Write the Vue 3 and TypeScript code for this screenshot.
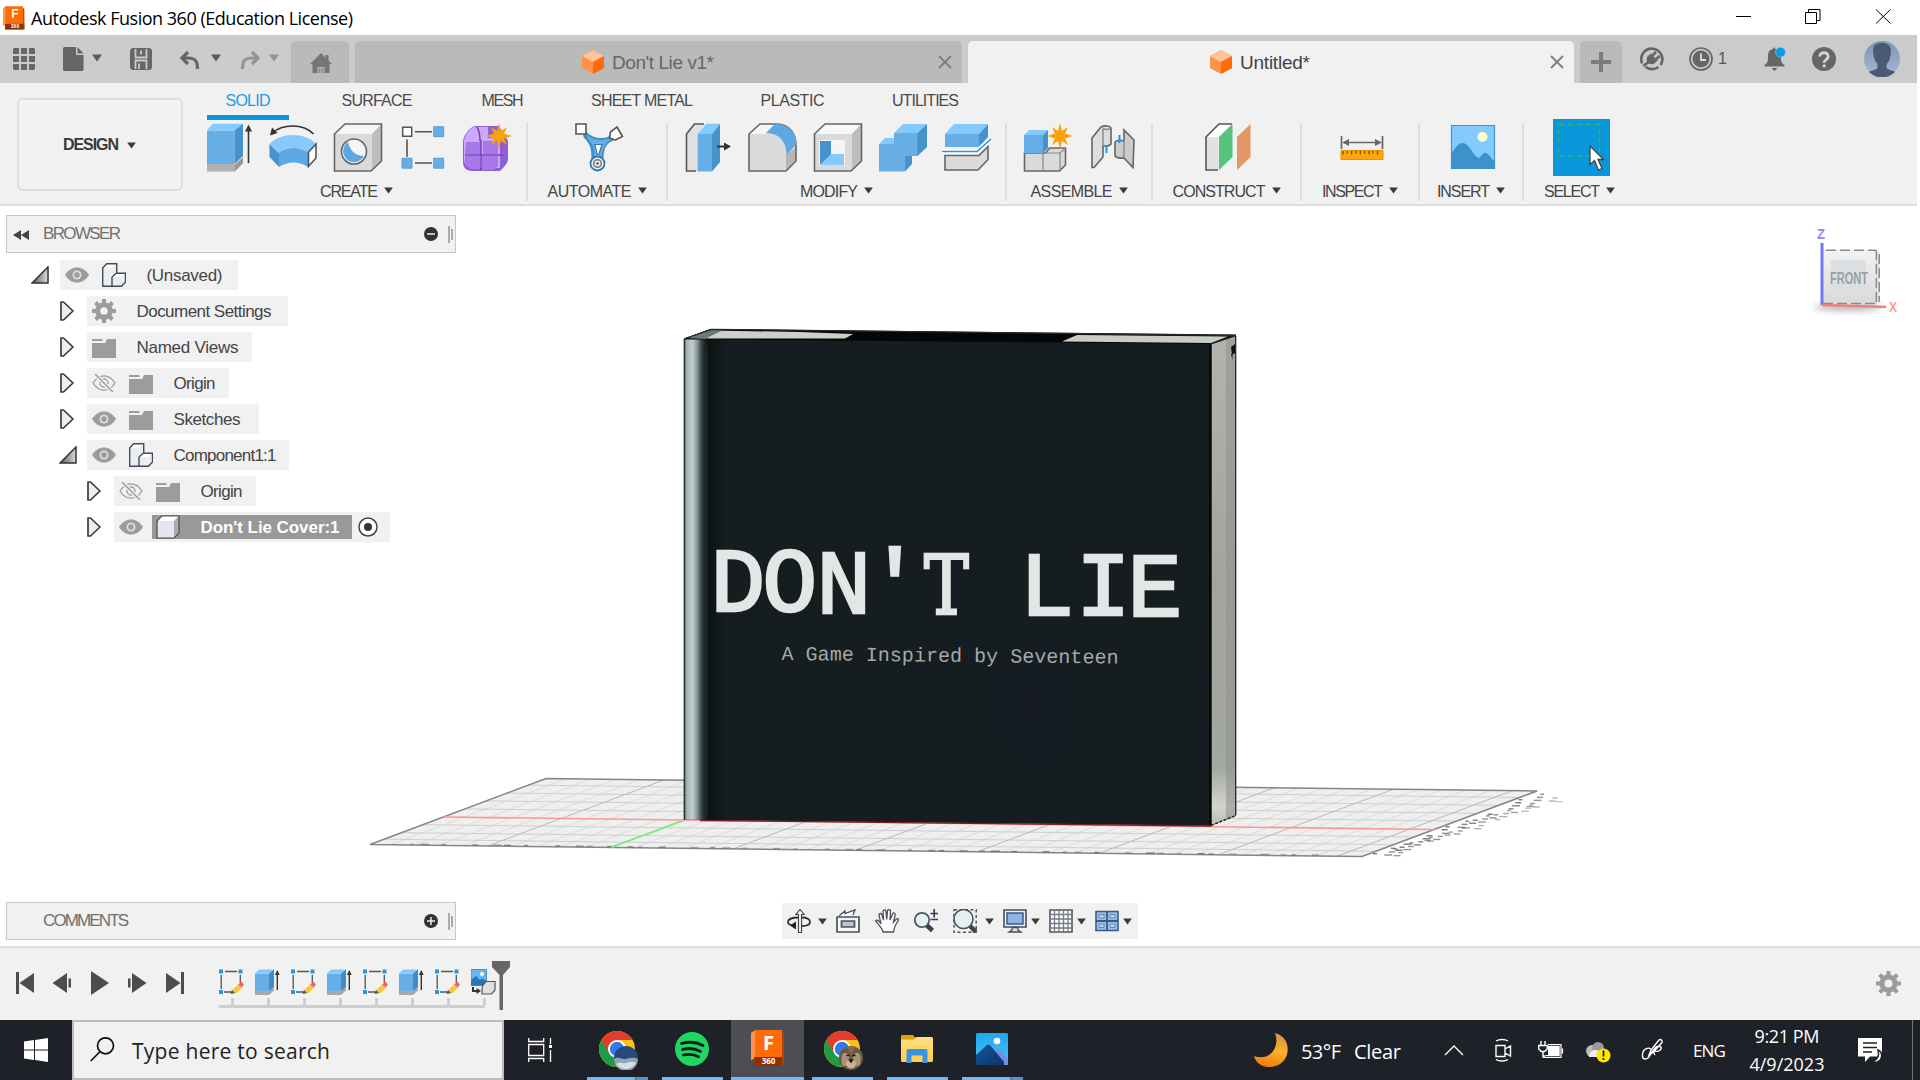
<script setup lang="ts">
interface Group { label: string; width: number; fit: number; tools: string[] }
interface TreeRow {
  depth: number; open?: boolean; width: number; eye?: 'on' | 'off'; icon: string
  label: string; fit: number; active?: boolean
}

// Spreads a text run over an exact width by adjusting its tracking.
const vFit = {
  mounted(el: HTMLElement, binding: { value: number }) {
    const chars = (el.textContent ?? '').length
    const natural = el.getBoundingClientRect().width
    const gap = (binding.value - natural) / Math.max(1, chars - 1)
    el.style.letterSpacing = `${gap}px`
    el.style.marginRight = `${-gap}px`
  },
}

const workspaceTabs = [
  { label: 'SOLID', fit: 45 }, { label: 'SURFACE', fit: 71 }, { label: 'MESH', fit: 42 },
  { label: 'SHEET METAL', fit: 102 }, { label: 'PLASTIC', fit: 64 }, { label: 'UTILITIES', fit: 67 },
]

const groups: Group[] = [
  { label: 'CREATE', width: 341, fit: 58, tools: ['extrude', 'revolve', 'hole', 'pattern', 'form'] },
  { label: 'AUTOMATE', width: 140, fit: 84, tools: ['automate'] },
  { label: 'MODIFY', width: 339, fit: 58, tools: ['presspull', 'fillet', 'shell', 'combine', 'split'] },
  { label: 'ASSEMBLE', width: 146, fit: 82, tools: ['component', 'joint'] },
  { label: 'CONSTRUCT', width: 149, fit: 93, tools: ['plane'] },
  { label: 'INSPECT', width: 118, fit: 61, tools: ['measure'] },
  { label: 'INSERT', width: 104, fit: 53, tools: ['picture'] },
  { label: 'SELECT', width: 111, fit: 56, tools: ['select'] },
]

const rows: TreeRow[] = [
  { depth: 0, open: true, width: 178, eye: 'on', icon: 'assembly', label: '(Unsaved)', fit: 76 },
  { depth: 1, width: 201, icon: 'gear', label: 'Document Settings', fit: 135 },
  { depth: 1, width: 165, icon: 'folder', label: 'Named Views', fit: 102 },
  { depth: 1, width: 142, eye: 'off', icon: 'folder', label: 'Origin', fit: 42 },
  { depth: 1, width: 172, eye: 'on', icon: 'folder', label: 'Sketches', fit: 67 },
  { depth: 1, open: true, width: 202, eye: 'on', icon: 'assembly', label: 'Component1:1', fit: 103 },
  { depth: 2, width: 142, eye: 'off', icon: 'folder', label: 'Origin', fit: 42 },
  { depth: 2, width: 276, eye: 'on', icon: 'body', label: "Don't Lie Cover:1", fit: 139, active: true },
]

const navTools: { icon: string; caret?: boolean }[] = [
  { icon: 'orbit', caret: true }, { icon: 'lookat' }, { icon: 'hand' }, { icon: 'zoom' },
  { icon: 'fit', caret: true }, { icon: 'display', caret: true }, { icon: 'grid', caret: true }, { icon: 'views', caret: true },
]

const playback = ['first', 'prev', 'play', 'next', 'last']
const features = ['t-sketch', 't-extrude', 't-sketch', 't-extrude', 't-sketch', 't-extrude', 't-sketch', 't-decal']

// Ground plane: corner points and the lines interpolated between its edges.
type P = [number, number]
const BL: P = [546, 778.5], BR: P = [1537, 791], FL: P = [370, 844.5], FR: P = [1362, 856.5]
const mix = (a: P, b: P, t: number): P => [a[0] + (b[0] - a[0]) * t, a[1] + (b[1] - a[1]) * t]
const seg = (a: P, b: P) => `M${a[0].toFixed(1)} ${a[1].toFixed(1)}L${b[0].toFixed(1)} ${b[1].toFixed(1)}`
const floorRows = [0.1, 0.22, 0.34, 0.46, 0.7, 0.82, 0.92].map(t => seg(mix(BL, FL, t), mix(BR, FR, t))).join('')
const majorX = [-0.004, 0.119, 0.242, 0.366, 0.489, 0.612, 0.735, 0.855, 0.975]
const major = majorX.slice(1).map(t => seg(mix(BL, BR, t), mix(FL, FR, t))).join('')
const minor = majorX.flatMap(t => [1, 2, 3, 4].map(k => t + k * 0.0246)).filter(t => t < 0.995)
  .map(t => seg(mix(BL, BR, t), mix(FL, FR, t))).join('')

const specks = Array.from({ length: 64 }, (_, i) => {
  const t = (i * 0.618) % 1
  const off = 1 + ((i * 37) % 44) * (0.35 + t * 0.45)
  return { x: 1372 + t * 160 + off, y: 853 - t * 60 + ((i * 13) % 5), w: 4 + (i % 5), o: 0.75 - off / 75 }
})
const frontMarks = Array.from({ length: 46 }, (_, i) => {
  const t = ((i * 0.618) % 1) * 0.93 + 0.04
  return { x: 370 + t * 992, y: 843 + t * 12, w: 4 + (i % 6), o: 0.4 + (i % 4) * 0.1 }
})
</script>

<template>
  <div class="screen">
    <svg class="defs" width="0" height="0" aria-hidden="true">
      <defs>
        <linearGradient id="gTri" x1="0" y1="0" x2="1" y2="0"><stop offset="0" stop-color="#555" /><stop offset="1" stop-color="#ddd" /></linearGradient>
        <linearGradient id="gMoon" x1="0.6" y1="0" x2="0.4" y2="1"><stop offset="0" stop-color="#cf9a45" /><stop offset=".5" stop-color="#fcb02c" /><stop offset="1" stop-color="#f0790f" /></linearGradient>
        <linearGradient id="gFolder" x1="0" y1="0" x2="0" y2="1"><stop offset="0" stop-color="#ffdf82" /><stop offset="1" stop-color="#ffcf48" /></linearGradient>
        <linearGradient id="gSky" x1="0" y1="0" x2="0" y2="1"><stop offset="0" stop-color="#1fa8ea" /><stop offset="1" stop-color="#4fc2f6" /></linearGradient>
        <linearGradient id="gMt" x1="0" y1="0" x2="1" y2="1"><stop offset="0" stop-color="#115a9e" /><stop offset="1" stop-color="#0f3068" /></linearGradient>
        <linearGradient id="gAv" x1="0" y1="0" x2="0" y2="1"><stop offset="0" stop-color="#7d95b5" /><stop offset="1" stop-color="#a7b8d3" /></linearGradient>
      </defs>
      <symbol id="caret" viewBox="0 0 10 8"><path d="M0 .5h10L5 7.5z" fill="currentColor" /></symbol>
      <symbol id="apps" viewBox="0 0 22 22"><path d="M1 0h5v6H0V1zM8 0h6v6H8zM16 0h5l1 1v5h-6zM0 8h6v6H0zM8 8h6v6H8zM16 8h6v6h-6zM0 16h6v6H1l-1-1zM8 16h6v6H8zM16 16h6v5l-1 1h-5z" fill="#666" /></symbol>
      <symbol id="file" viewBox="0 0 21 24"><path d="M1 0h12v8h7.500v15l-1 1H1l-1-1V1zM14.500 0l6 6.500h-6z" fill="#666" /></symbol>
      <symbol id="save" viewBox="0 0 22 22"><path d="M2 0h18l2 2v18l-2 2H2l-2-2V2z" fill="#666" /><path d="M5.500 1v8.500h11V1M5.500 21v-8.500h11V21M11 2.500v4M9 15.500V21" fill="none" stroke="#cbcbcb" stroke-width="1.800" /></symbol>
      <symbol id="undo" viewBox="0 0 22 20"><path d="M9 2L3 8l6 6M3.500 8H9c8 0 9.500 4 9.500 11" fill="none" stroke="currentColor" stroke-width="3.200" /></symbol>
      <symbol id="home" viewBox="0 0 22 20"><path d="M11 0l4.500 4.500V2h3v5.500L22 11h-2.500v9h-5v-6h-7v6h-5v-9H0z" fill="#757575" /><path d="M8.500 15h2v5h-2zM11.500 15h2v5h-2z" fill="#8c8c8c" /></symbol>
      <symbol id="cube" viewBox="0 0 22 24"><path d="M11 0l11 6v12l-11 6L0 18V6z" fill="#ff9249" /><path d="M11 0l11 6-11 6L0 6z" fill="#ffc49a" /><path d="M22 6v12l-11 6V12z" fill="#ff6c05" /></symbol>
      <symbol id="x" viewBox="0 0 14 14"><path d="M1 1l12 12M13 1L1 13" stroke="#808080" stroke-width="2" fill="none" /></symbol>
      <symbol id="plus" viewBox="0 0 20 20"><path d="M8 0h4v8h8v4h-8v8H8v-8H0V8h8z" fill="#7b7b7b" /></symbol>
      <symbol id="ext" viewBox="0 0 24 24"><path d="M2.200 16.500A10.500 10.500 0 1 1 20.500 18M18.500 20a10.500 10.500 0 0 1-13-.3" fill="none" stroke="#666" stroke-width="2.600" /><path d="M7 14.500c-1-3 0-5 1.500-6L11 6.500l6.500 7-2.500 2.500c-2 1.500-4 1.500-6 .5L4 20l-1.500-2z" fill="#666" /><path d="M12.500 8.500l3.500-3.500M16 12.500l3.500-3.500" stroke="#666" stroke-width="2.600" /></symbol>
      <symbol id="clock" viewBox="0 0 24 24"><circle cx="12" cy="12" r="11" fill="none" stroke="#666" stroke-width="1.700" /><circle cx="12" cy="12" r="8.500" fill="#666" /><path d="M12 6.500V13h5" stroke="#ddd" stroke-width="1.800" fill="none" /></symbol>
      <symbol id="bell" viewBox="0 0 22 24"><path d="M10 0l1.500 2C17 3 17 7 17 11s1 5.500 3.500 7v1.500h-20V18C3 16.500 4 15 4 11S4 3 9 2zM7.500 21h6l-3 3z" fill="#666" /><circle cx="16.500" cy="5.200" r="5" fill="#0d9be4" stroke="#cbcbcb" stroke-width=".5" /></symbol>
      <symbol id="help" viewBox="0 0 24 24"><circle cx="12" cy="12" r="12" fill="#666" /><path d="M7.800 9.500c0-5 8.400-5 8.400 0 0 3-4 3-4 6.200M12.200 17.500v2.800" stroke="#d5d5d5" stroke-width="2.800" fill="none" /></symbol>
      <symbol id="avatar" viewBox="0 0 36 36"><circle cx="18" cy="18" r="18" fill="url(#gAv)" /><path d="M9.500 6c2-5 15-6 17 1 .8 3 .3 8-.8 11-.8 3-2 4-3 5v4c1 2 5.500 2 8.300 4A18 18 0 0 1 5 31c3-2 7.500-2 8.500-4v-4c-1-1-2.500-3-3-5-1-3-2-8-1-12z" fill="#4a5a72" /></symbol>

      <symbol id="extrude" viewBox="0 0 50 50"><path d="M3 42h28l8-7v6l-8 8.500H3z" fill="#b0b0b0" /><path d="M31 43l8-7v5l-8 8z" fill="#999" /><path d="M3 8.500h27.500V42H3z" fill="#68aee6" /><path d="M3 8.500L8.500 1.800H39l-8.500 6.700z" fill="#85caff" /><path d="M39 1.800V34l-8.500 8V8.500z" fill="#4592cc" /><path d="M44.500 41V8" stroke="#333" stroke-width="1.600" /><path d="M44.500 2.500l3.500 7h-7z" fill="#333" /></symbol>
      <symbol id="revolve" viewBox="0 0 50 50"><path d="M1.500 22l9.500 9v14L1.500 35z" fill="#4592cc" /><path d="M1.500 22C13 10 37 10 48 22l-8 8.500c-8-6-21-6-29 0z" fill="#85caff" /><path d="M11 30.500c8-6 21-6 29 0V45c-9-6-20-6-29 0z" fill="#5da8e2" /><path d="M40.500 30l7.500-8v14l-7.500 8.500z" fill="#fff" stroke="#555" stroke-width="1.600" /><path d="M4.500 11C14 2 35 1 45.500 12" fill="none" stroke="#333" stroke-width="1.600" /><path d="M2 13.500l2-8 5.500 5.500z" fill="#333" /></symbol>
      <symbol id="hole" viewBox="0 0 50 50"><path d="M1.500 12L12 2h36.500v37L38 49H1.500z" fill="#dadada" /><path d="M1.500 12L12 2h36.500L39 12z" fill="#f5f5f5" /><path d="M48.500 2v37L39 48.500V12z" fill="#bdbdbd" /><path d="M1.500 12L12 2h36.500v37L38 49H1.500z" fill="none" stroke="#666" stroke-width="1.600" /><circle cx="21" cy="29.500" r="12.500" fill="#f5f5f5" stroke="#666" stroke-width="1.600" /><path d="M15 20a11 11 0 1 0 16 14c-8 0-14-5-16-14z" fill="#5da8e2" /></symbol>
      <symbol id="pattern" viewBox="0 0 50 50"><path d="M17 9.700h17M9 17.500V35M17 41h17" stroke="#555" stroke-width="1.600" /><path d="M4.700 5.200h9v9h-9z" fill="#fff" stroke="#555" stroke-width="1.500" /><path d="M35.700 4.700h10v10h-10zM4 36.200h10v10H4zM35.700 36.200h10v10h-10z" fill="#68aee6" stroke="#4592cc" stroke-width=".8" /></symbol>
      <symbol id="form" viewBox="0 0 50 50"><path d="M13 4h24l9 15v18c0 4-4 8-8 12H10c-6 0-9-4-9-9V20c0-5 5-14 12-16z" fill="#8e5fd0" /><path d="M12 5h14v11h12v30H11c-6 0-9-4-9-9V20c0-6 5-13 10-15z" fill="#cda8ff" /><path d="M4 20h15v12H3zM21 19h15v13H21zM3 34h15v13h-8c-5 0-7-4-7-8zM20 34h16v10l-4 4H20z" fill="#a878e8" /><path d="M15 5c2 3 3 8 3 14M3 33h38M19 18v30" stroke="#7443b5" stroke-width="1.500" fill="none" /><path d="M37 1l2 8 6-4-3 6.500 8 2.500-8 2.500 3 6.500-6-4-2 8-2-8-6 4 3-6.500-8-2.500 8-2.500-3-6.500 6 4z" fill="#f8a20c" /></symbol>
      <symbol id="automate" viewBox="0 0 50 50"><path d="M10 9c3 0 6 7 17 7 5 0 8-1 10-4l4 6c-8 2-12 7-11.500 22h-12c0-12-.5-15-4-20S8 15 10 9z" fill="#3f8fca" /><path d="M12 11c3 5 9 7 15 7 5 0 7-1 10-3l1 2c-7 3-10 8-11 23h-6.500c0-13-.5-16-4-20-3-4-4-6-4.500-9z" fill="#68aee6" /><path d="M21 22.500h7L25 32h-2z" fill="#fff" stroke="#3478ad" stroke-width="1.200" /><path d="M2 2h10v10H2z" fill="#fff" stroke="#555" stroke-width="1.600" /><path d="M43 5l5.500 9.500-7 3.500-6-2 1-6z" fill="#fff" stroke="#555" stroke-width="1.600" /><circle cx="23.500" cy="41.500" r="7" fill="#eee" stroke="#3478ad" stroke-width="1.800" /><circle cx="23.500" cy="41.500" r="3.800" fill="none" stroke="#777" stroke-width="1.500" /><circle cx="23.500" cy="41.500" r="1.300" fill="#555" /></symbol>
      <symbol id="presspull" viewBox="0 0 50 50"><path d="M2.500 12l8-10H20l-7 10v37H2.500z" fill="#e0e0e0" /><path d="M12 49H2.500V12l8-10H20" fill="none" stroke="#555" stroke-width="1.600" /><path d="M13.500 12H28v37.500H13.500z" fill="#68aee6" /><path d="M13.500 12L22 1.700h14L28 12z" fill="#85caff" /><path d="M36 1.700V40l-8 9.500V12z" fill="#4592cc" /><path d="M33 24.500h8" stroke="#333" stroke-width="2" /><path d="M47 24.500l-7-4v8z" fill="#333" /></symbol>
      <symbol id="fillet" viewBox="0 0 50 50"><path d="M1 12L12 2h16c14 0 20 10 20 25v11L38 49H1z" fill="#dadada" /><path d="M1 12L12 2h14l-8 10z" fill="#f5f5f5" /><path d="M38 33l10-8v13L38 49z" fill="#b5b5b5" /><path d="M1 12L12 2h16c14 0 20 10 20 22v15L38 49H1z" fill="none" stroke="#666" stroke-width="1.600" /><path d="M18 11L27 2c14 0 21.500 9 21.500 20l-10 11c0-13-7-22-20.500-22z" fill="#5da8e2" /></symbol>
      <symbol id="shell" viewBox="0 0 50 50"><path d="M1.500 12L12 2h36.500v37L38 49H1.500z" fill="#dadada" /><path d="M1.500 12L12 2h36.500L39 12z" fill="#f8f8f8" /><path d="M48.500 2v37L39 48.500V12z" fill="#bdbdbd" /><path d="M1.500 12L12 2h36.500v37L38 49H1.500z" fill="none" stroke="#666" stroke-width="1.600" /><path d="M6 18h26v26H6z" fill="#f5f5f5" /><path d="M7 19h11v14L7 43z" fill="#4592cc" /><path d="M18 32h13v11.500H7z" fill="#85caff" /></symbol>
      <symbol id="combine" viewBox="0 0 50 50"><path d="M1 22h15V11h24v23H27v15.500H1z" fill="#68aee6" /><path d="M1 22l6-6h9v6zM16 11l9-9h24l-9.500 9z" fill="#85caff" /><path d="M49 2v23l-9.500 9V11zM27 34h7v8l-7 7.500z" fill="#4592cc" /></symbol>
      <symbol id="split" viewBox="0 0 50 50"><path d="M3 12h34v13H3z" fill="#68aee6" /><path d="M3 12l9-10h34L37 12z" fill="#85caff" /><path d="M46 2v13l-9 10V12z" fill="#4592cc" /><path d="M3 33.500h34l9-9v13L36 48H3z" fill="#dadada" stroke="#666" stroke-width="1.600" /><path d="M0 29.500h35L49 17" fill="none" stroke="#fff" stroke-width="5" /><path d="M0 29.500h35L49 17" fill="none" stroke="#2196e8" stroke-width="1.600" /></symbol>
      <symbol id="component" viewBox="0 0 50 50"><path d="M1.500 31h21l4-5h16v17l-6 6h-35z" fill="#dadada" stroke="#666" stroke-width="1.600" /><path d="M20 31h17l6-5M20 31v18M37 31v17" stroke="#888" stroke-width="1.200" fill="none" /><path d="M1 13h19v18H1z" fill="#68aee6" /><path d="M1 13l5-5h19l-5 5z" fill="#85caff" /><path d="M25 8v18l-5 5V13z" fill="#4592cc" /><path d="M37 1l2 8 6-4-3 6.500 8 2.500-8 2.500 3 6.500-6-4-2 8-2-8-6 4 3-6.500-8-2.500 8-2.500-3-6.500 6 4z" fill="#f8a20c" /></symbol>
      <symbol id="joint" viewBox="0 0 50 50"><path d="M4 16l9-11c4-2 9-1 10 1v16c-2 3-6 2-8 2v11L6 45.500H4z" fill="#ddd" stroke="#666" stroke-width="1.600" /><path d="M15 7v17M15 6c2 2 6 2 8 0" fill="none" stroke="#888" stroke-width="1.400" /><path d="M46 18L36 8v11c-3-1-7-1-9 1v14c2 3 6 2 9 2l9 9.500z" fill="#ccc" stroke="#666" stroke-width="1.600" /><path d="M36 18v18" stroke="#888" stroke-width="1.400" /><path d="M18.500 23v8M31.500 13v8" stroke="#2196e8" stroke-width="2" /></symbol>
      <symbol id="plane" viewBox="0 0 50 50"><path d="M3 15L16 2h13L15.500 15v33H3z" fill="#e2e2e2" /><path d="M3 15L16 2h13L15.500 15z" fill="#fff" /><path d="M15 48H3V15L16 2h13" fill="none" stroke="#555" stroke-width="1.600" /><path d="M16 15L29.500 2v33L16 48z" fill="#56c47a" /><path d="M34 15L47.500 2v33L34 48z" fill="#e39764" /></symbol>
      <symbol id="measure" viewBox="0 0 50 50"><path d="M4.500 14v13M45.500 14v13M8 20.500h34" stroke="#666" stroke-width="1.700" /><path d="M5 20.500l7-3.500v7zM45 20.500L38 17v7z" fill="#666" /><path d="M4 28.500h42v9H4z" fill="#ffa60a" stroke="#e89000" /><path d="M6 29v3.500M10.300 29v2.500M14.600 29v3.500M19 29v2.500M23.300 29v3.500M27.600 29v2.500M32 29v3.500M36 29v2.500M40.500 29v3.500" stroke="#7a5200" stroke-width="1.300" /></symbol>
      <symbol id="picture" viewBox="0 0 50 50"><path d="M3.500 3.500h43v43h-43z" fill="#85caff" stroke="#3d95d0" stroke-width="1.200" /><path d="M4 31c6-10 10-12 15-8s7 12 12 13c3-2 4-6 7-5s5 5 8 8v7.500H4z" fill="#3e92cc" /><circle cx="34.500" cy="15" r="5" fill="#ffffc8" /></symbol>
      <symbol id="select" viewBox="0 0 57 57"><path d="M0 0h57v57H0z" fill="#0a96da" /><path d="M5.500 5.500h41v31.500h-41z" fill="none" stroke="#2bb673" stroke-width="1.600" stroke-dasharray="5.500 3.500" /><path d="M37 27v18.500l4.500-4 4 9.500 3.500-1.500-4-9h5.500z" fill="#fff" stroke="#444" stroke-width="1.300" /></symbol>

      <symbol id="eye" viewBox="0 0 24 18"><path d="M0 9C6-1 18-1 24 9 18 19 6 19 0 9z" fill="#9c9c9c" /><circle cx="12" cy="9" r="4.500" fill="#ddd" /><circle cx="12" cy="9" r="2.700" fill="#9c9c9c" /></symbol>
      <symbol id="eyeoff" viewBox="0 0 24 18"><path d="M1 9C7-.5 17-.5 23 9 17 18.500 7 18.500 1 9z" fill="none" stroke="#9c9c9c" stroke-width="1.300" /><circle cx="12" cy="9" r="4" fill="none" stroke="#9c9c9c" stroke-width="1.400" /><path d="M3 0l18 18" stroke="#f1f1f1" stroke-width="4" /><path d="M3 0l18 18" stroke="#999" stroke-width="1.400" /></symbol>
      <symbol id="folder" viewBox="0 0 24 20"><path d="M0 1h10l1 2H0zM0 5h13l2-4h9v19H0z" fill="#9c9c9c" /></symbol>
      <symbol id="gear" viewBox="0 0 24 24"><circle cx="12" cy="12" r="6.300" fill="none" stroke="#9c9c9c" stroke-width="5" /><path d="M12 0v5M12 19v5M0 12h5M19 12h5M3.500 3.500l4 4M16.500 16.500l4 4M20.500 3.500l-4 4M7.500 16.500l-4 4" stroke="#9c9c9c" stroke-width="4" /></symbol>
      <symbol id="assembly" viewBox="0 0 24 24"><path d="M.7 5l4-4.300h10V10h8.600l.2 9-4 4.300H.7z" fill="#eceef2" /><path d="M.7 5l4-4.300h10L10 5zM10 14l4-4h9l-4 4z" fill="#fff" /><path d="M.7 5l4-4.300h10V10l8.800.3V19l-4 4.300H.7zM10 14v9M10 14l4.500-4" fill="none" stroke="#444b5a" stroke-width="1.400" /></symbol>
      <symbol id="body" viewBox="0 0 24 24"><path d="M1 6l5-5.200h17V18l-5 5.200H1z" fill="#e3e6ec" /><path d="M1 6l5-5.200h17L18 6z" fill="#fff" /><path d="M23 .8V18l-5 5.200V6z" fill="#aab" /><path d="M1 6l5-5.200h17V18l-5 5.200H1z" fill="none" stroke="#555" stroke-width="1.300" /></symbol>
      <symbol id="tri" viewBox="0 0 14 20"><path d="M1 1h2.500L13 10 3.500 19H1z" fill="#eee" stroke="#3c3c3c" stroke-width="1.700" stroke-linejoin="round" /></symbol>
      <symbol id="triopen" viewBox="0 0 18 18"><path d="M17 1v16H1z" fill="url(#gTri)" stroke="#333" stroke-width="1.500" /></symbol>

      <symbol id="orbit" viewBox="0 0 24 24"><path d="M12 8.500c-8 0-11 2-11 4.500s4 3.500 8 3.500M15 17c5 0 8-1.500 8-4s-3-4.500-8-4.500" fill="none" stroke="#333" stroke-width="1.800" /><path d="M3 16.500l6-4v8z" fill="#222" /><path d="M13 .5l4 5h-2.500v18h-3v-18H9z" fill="#fff" stroke="#444" stroke-width="1.200" /></symbol>
      <symbol id="lookat" viewBox="0 0 24 24"><path d="M1 8h22v15H1z" fill="#f3f5f8" stroke="#4a5262" stroke-width="1.700" /><path d="M5.500 12h13v6h-13z" fill="#bcc3cc" stroke="#4a5262" stroke-width="1.700" /><path d="M3 7l6-5v2.500L19 .8 17 6" fill="#fff" stroke="#4a5262" stroke-width="1.300" /></symbol>
      <symbol id="hand" viewBox="0 0 24 24"><path d="M8 23c0-3-5-8-7.300-11 1-2 4 0 5.300 3L4 6c0-2 2.500-2 3 0l1.500 5L8 2.500c0-2 3-2 3 0l.7 8L12.500 2c0-2 3-2 3 .3L15 11l2.500-6c1-2 3-1 2.600 1L18.500 13l3-3c1.500-1 2.500.5 1.500 2-2 3-4 6-4.500 11z" fill="#fdfdfd" stroke="#4a4f5a" stroke-width="1.300" /></symbol>
      <symbol id="zoom" viewBox="0 0 24 24"><circle cx="8" cy="11" r="7.200" fill="#e5f2f3" stroke="#4a5262" stroke-width="1.700" /><path d="M13 16.500l5.500 5" stroke="#39404d" stroke-width="4.500" /><path d="M16.500 4.500h7.500M20.200 0v8.500M16.500 10.500H24" stroke="#39404d" stroke-width="1.700" /></symbol>
      <symbol id="fit" viewBox="0 0 24 24"><path d="M1 .8h22.200v22.500H1z" fill="none" stroke="#555" stroke-width="1.500" stroke-dasharray="3 2.500" /><circle cx="10.500" cy="10" r="9.500" fill="#e5f0ef" stroke="#4a5262" stroke-width="1.600" /><path d="M17 17l6 6" stroke="#444" stroke-width="4.500" /></symbol>
      <symbol id="display" viewBox="0 0 24 24"><path d="M1 1h22v17H1z" fill="#eef0f4" stroke="#444b5a" stroke-width="1.600" /><path d="M4 4h16v11H4z" fill="#8fb4df" stroke="#375a92" stroke-width="1.500" /><path d="M9 18.500h6v2.500l3 2H6l3-2z" fill="#ddd" stroke="#444b5a" stroke-width="1.300" /></symbol>
      <symbol id="grid" viewBox="0 0 24 24"><path d="M1 1h22v22H1z" fill="#fff" stroke="#555" stroke-width="1.600" /><path d="M5.500 1v22M10 1v22M14.500 1v22M19 1v22M1 5.500h22M1 10h22M1 14.500h22M1 19h22" stroke="#737b86" stroke-width="1.300" /></symbol>
      <symbol id="views" viewBox="0 0 24 24"><path d="M1 2.500h22v19H1z" fill="#9bbce4" stroke="#3a5a8c" stroke-width="1.600" /><path d="M12 2v20M1 12h22" stroke="#3a5a8c" stroke-width="1.800" /><path d="M4 5.500h5v3.500H4zM15 5.500h5v3.500h-5zM4 15h5v3.500H4zM15 15h5v3.500h-5z" fill="#bfd6f2" stroke="#5f87bd" stroke-width="1" /></symbol>

      <symbol id="first" viewBox="0 0 20 24"><path d="M1 1h3v22H1zM19 2v20L4.500 12z" fill="#4d4d4d" /></symbol>
      <symbol id="prev" viewBox="0 0 20 24"><path d="M15 2v20L.5 12zM16.500 7.500H19v9h-2.500z" fill="#4d4d4d" /></symbol>
      <symbol id="play" viewBox="0 0 20 24"><path d="M1 0v24l18-12z" fill="#4d4d4d" /></symbol>
      <symbol id="next" viewBox="0 0 20 24"><path d="M5 2v20l14.500-10zM1 7.500h2.500v9H1z" fill="#4d4d4d" /></symbol>
      <symbol id="last" viewBox="0 0 20 24"><path d="M16 1h3v22h-3zM1 2v20l14.500-10z" fill="#4d4d4d" /></symbol>
      <symbol id="t-sketch" viewBox="0 0 25 26"><path d="M2.200 6v14M6 2.500h12M21.300 6v8M5 23h8" stroke="#555" stroke-width="1.300" /><path d="M0 .5h4v4H0zM19.500 .5h4v4h-4zM0 21h4v4H0z" fill="#1e96ea" /><path d="M13 21.500l7-7 3.500 3.500-7 7z" fill="#ffc24b" /><path d="M19.500 15.500l2.500-3 3 3-2.500 3z" fill="#f25c5c" /><path d="M11.500 25l1.500-4 3 3z" fill="#555" /></symbol>
      <symbol id="t-extrude" viewBox="0 0 25 26"><path d="M0 22h14l5-4v3.500L14 26H0z" fill="#a9a9a9" /><path d="M0 4.500h14V22H0z" fill="#68aee6" /><path d="M0 4.500L4 .5h15l-5 4z" fill="#85caff" /><path d="M19 .5V18l-5 4V4.500z" fill="#3e8dc8" /><path d="M22.300 21V4" stroke="#333" stroke-width="1.400" /><path d="M22.300 1l2.400 5h-4.800z" fill="#333" /></symbol>
      <symbol id="t-decal" viewBox="0 0 25 26"><path d="M0 .5h15.500v16H0z" fill="#68b7f2" stroke="#3e92cc" /><path d="M0 11l5-4 4 4 2-2 4.500 3v4.500H0z" fill="#2878b5" /><circle cx="11" cy="5" r="2" fill="#ffffc8" /><path d="M2 18v4h4" fill="none" stroke="#333" stroke-width="2" /><path d="M10 22l-4.500-3v6z" fill="#333" /><path d="M12 16l3-3.500h9V21l-3.500 4H11v-6z" fill="#e0e0e0" stroke="#555" stroke-width="1.200" /></symbol>

      <symbol id="fusion" viewBox="0 0 34 36"><path d="M0 3l5-3 4 1v26l-9 3z" fill="#ff9350" /><path d="M3 26h30v10H3z" fill="#8f3200" /><path d="M3 1.500C3 .6 4 0 5 0h26v27H3z" fill="#ff6b06" /><path d="M31 2l2 2v31h-2z" fill="#b34400" /><path d="M0 3l4-2.500V27l-4 2z" fill="#ff9350" /></symbol>
      <symbol id="chrome" viewBox="0 0 36 36"><circle cx="18" cy="18" r="18" fill="#fbc116" /><path d="M2.400 9A18 18 0 0 0 17 36l9-13.500z" fill="#229b47" /><path d="M2.400 9l7.800 13.500L18 9h15.600A18 18 0 0 0 2.400 9z" fill="#e33b2e" /><circle cx="18" cy="18" r="9" fill="#fff" /><circle cx="18" cy="18" r="7.200" fill="#2f7bea" /></symbol>
      <symbol id="b-sky" viewBox="0 0 24 24"><circle cx="12" cy="12" r="12" fill="#27497f" /><path d="M0 13c5-3 8 1 12 0s8-2 12 0A12 12 0 0 1 0 13z" fill="#8fa3b8" /><path d="M2 18c4-3 6 0 10-1s6-2 10 0a12 12 0 0 1-20 1z" fill="#d8dfe6" /></symbol>
      <symbol id="b-cat" viewBox="0 0 24 24"><circle cx="12" cy="12" r="12" fill="#6b573f" /><path d="M3 9c2-4 6-2 7 2s-2 10-5 9-3-7-2-11zM21 9c-2-4-6-2-7 2s2 10 5 9 3-7 2-11z" fill="#a8937a" /><path d="M7 1c3 2 3 5 5 8 2-3 2-6 5-8-3-1.500-7-1.500-10 0z" fill="#8a6b48" /><ellipse cx="12" cy="18" rx="5" ry="4.500" fill="#c9b391" /><path d="M7.500 9.500h3M13.500 9.500h3M10.500 14h3L12 16z" stroke="#1c130c" stroke-width="1.500" /></symbol>
      <symbol id="spotify" viewBox="0 0 34 34"><circle cx="17" cy="17" r="17" fill="#1ed760" /><path d="M6.500 11.500c7-2 15-1.500 21.500 2M7.500 17.500c6-1.700 12.500-1 18 2M8.500 23c5-1.200 10.500-.8 15 1.800" fill="none" stroke="#1b1f22" stroke-width="2.800" stroke-linecap="round" /></symbol>
      <symbol id="explorer" viewBox="0 0 32 28"><path d="M0 1l1-1h11l2.500 3v4H0z" fill="#dfa10a" /><path d="M0 4.500h13l2-2.500h16l1 1v23l-1 1H1l-1-1z" fill="url(#gFolder)" /><path d="M5.500 28V16c0-1 .5-2 1.500-2h18c1 0 1.500 1 1.500 2v12h-5v-7.500h-11V28z" fill="#3a92e0" /></symbol>
      <symbol id="photos" viewBox="0 0 32 32"><path d="M1 0h30l1 1v30l-1 1H1l-1-1V1z" fill="url(#gSky)" /><path d="M14 23l8-8 10 11v6H14z" fill="#6f8fe6" /><path d="M0 22l11-10c1-.8 2-.8 3 0l14 17v3H0z" fill="url(#gMt)" /><circle cx="21" cy="8" r="3.300" fill="#fff" /></symbol>
    </svg>

    <header class="titlebar">
      <span class="badge"><svg class="ico-app"><use href="#fusion" /></svg><b class="badge-f">F</b><b class="badge-n">360</b></span>
      <span v-fit="322" class="title">Autodesk Fusion 360 (Education License)</span>
      <svg class="winctl" width="155" height="15" viewBox="0 0 155 15" fill="none" stroke="#000" stroke-width="1">
        <path d="M0 7.500h15M69.500 3.500h11v11h-11zM72.500 3.500v-3h11.500v11h-3.500M140 .5l14.500 14M154.500 .5L140 14.500" />
      </svg>
    </header>

    <nav class="tabbar">
      <svg class="q apps"><use href="#apps" /></svg>
      <svg class="q file"><use href="#file" /></svg>
      <svg class="q caret c1"><use href="#caret" /></svg>
      <svg class="q save"><use href="#save" /></svg>
      <svg class="q undo"><use href="#undo" /></svg>
      <svg class="q caret c2"><use href="#caret" /></svg>
      <svg class="q redo"><use href="#undo" /></svg>
      <svg class="q caret c3"><use href="#caret" /></svg>
      <div class="tab home"><svg width="22" height="20"><use href="#home" /></svg></div>
      <div class="tab doc">
        <svg class="cube"><use href="#cube" /></svg><span v-fit="102">Don't Lie v1*</span>
        <svg class="close"><use href="#x" /></svg>
      </div>
      <div class="tab doc current">
        <svg class="cube"><use href="#cube" /></svg><span v-fit="70">Untitled*</span>
        <svg class="close"><use href="#x" /></svg>
      </div>
      <div class="tab add"><svg width="20" height="20"><use href="#plus" /></svg></div>
      <svg class="r ext"><use href="#ext" /></svg>
      <svg class="r clock"><use href="#clock" /></svg>
      <span class="jobs">1</span>
      <svg class="r bell"><use href="#bell" /></svg>
      <svg class="r help"><use href="#help" /></svg>
      <svg class="r avatar"><use href="#avatar" /></svg>
    </nav>

    <section class="ribbon">
      <button class="design"><b v-fit="56">DESIGN</b><svg class="car"><use href="#caret" /></svg></button>
      <div class="ribbon-main">
        <div class="modes">
          <span v-for="(t, i) in workspaceTabs" :key="t.label" class="mode" :class="{ on: i === 0 }"><span v-fit="t.fit">{{ t.label }}</span></span>
        </div>
        <div class="groups">
          <div v-for="g in groups" :key="g.label" class="group" :style="{ width: g.width + 'px' }">
            <div class="tools">
              <span v-for="t in g.tools" :key="t" class="slot"><svg :class="t === 'select' ? 'sel' : 'tool'"><use :href="'#' + t" /></svg></span>
            </div>
            <div class="glabel"><span v-fit="g.fit">{{ g.label }}</span><svg class="car"><use href="#caret" /></svg></div>
          </div>
        </div>
      </div>
    </section>

    <main class="viewport">
      <svg class="scene" viewBox="0 208 1920 738" width="1920" height="738">
        <defs>
          <linearGradient id="spine" x1="0" x2="1"><stop offset="0" stop-color="#5b6869" /><stop offset=".12" stop-color="#a9b7b8" /><stop offset=".33" stop-color="#bfcccc" /><stop offset=".5" stop-color="#8a9899" /><stop offset=".68" stop-color="#364244" /><stop offset=".85" stop-color="#12191b" /><stop offset="1" stop-color="#0b1214" /></linearGradient>
          <linearGradient id="side" x1="0" y1="0" x2="0" y2="1"><stop offset="0" stop-color="#b2b3ac" /><stop offset=".5" stop-color="#a3a49d" /><stop offset=".88" stop-color="#a2a7a1" /><stop offset=".96" stop-color="#d0d4ca" /><stop offset="1" stop-color="#b9bdb4" /></linearGradient>
          <linearGradient id="face" x1="0" x2="1"><stop offset="0" stop-color="#0b1214" /><stop offset=".04" stop-color="#151d20" /><stop offset="1" stop-color="#151d20" /></linearGradient>
          <radialGradient id="glow"><stop offset="0" stop-color="#161b27" /><stop offset="1" stop-color="#151d20" stop-opacity="0" /></radialGradient>
          <linearGradient id="vc" x1="0" y1="0" x2="0" y2="1"><stop offset="0" stop-color="#f3f3f3" /><stop offset="1" stop-color="#d8d8d8" /></linearGradient>
          <filter id="soft" x="-20%" y="-60%" width="140%" height="220%"><feGaussianBlur stdDeviation="3" /></filter>
        </defs>
        <path d="M546 778.500L1537 791L1362 856.500L370 844.500Z" fill="#efefef" />
        <path :d="minor" stroke="#dadada" stroke-width=".9" fill="none" />
        <path :d="floorRows" stroke="#cfcfcf" stroke-width="1" fill="none" />
        <path :d="major" stroke="#b9b9b9" stroke-width="1" fill="none" />
        <path d="M546 778.500L1537 791L1362 856.500L370 844.500Z" fill="none" stroke="#858585" stroke-width="1.500" />
        <rect v-for="(m, i) in frontMarks" :key="'m' + i" :x="m.x" :y="m.y" :width="m.w" height="1.200" fill="#555" :opacity="m.o" />
        <rect v-for="(s, i) in specks" :key="'s' + i" :x="s.x" :y="s.y" :width="s.w" height="1.400" fill="#444" :opacity="s.o" />
        <path d="M444 817L1435 829.500" stroke="#ff9696" stroke-width="1.600" />
        <path d="M684 820.500L611 847.500" stroke="#7cf07c" stroke-width="1.600" />

        <path d="M684 338.500L711 329L1236 334.500V815.500L1211 825.500L684 819.500Z" fill="#151d20" />
        <path d="M684 338.500L711 329L1236 335.500L1211 344L700 340Z" fill="#050707" />
        <path d="M690 337.500L712 330.500L800 332L853 334L845 338.500L710 338.500Z" fill="#cdd0c7" />
        <path d="M687 338L711 330L722 330.500L705 339Z" fill="#6f7874" />
        <path d="M1077 335L1228 336.500L1211 343L1062 341.500Z" fill="#cbccc4" />
        <path d="M707 339.500L1211 344V825.500L707 820Z" fill="url(#face)" />
        <ellipse cx="1035" cy="700" rx="75" ry="110" fill="url(#glow)" />
        <path d="M684 339.500L710 339.500V820L684 819.500Z" fill="url(#spine)" />
        <path d="M706.500 345V819" stroke="#232c2e" stroke-width="1" />
        <path d="M1211 344L1236 335.500V815.500L1211 825.500Z" fill="url(#side)" />
        <path d="M1226 339L1236 335.500V815.500L1226 820Z" fill="#8f928b" opacity=".55" />
        <path d="M1231 347l4-3v9l-3 2zM1231 354h1.500v6z" fill="#111" />
        <path d="M1210.500 344V825.500" stroke="#050606" stroke-width="2.400" />
        <path d="M684.300 339V820M684 339L711 329.300L1236 335.500M1235.700 336V815.500M1211 344L1236 335.700" fill="none" stroke="#222a2b" stroke-width="1.300" />
        <path d="M1211 825.500L1236 815.500" stroke="#222" stroke-width="1.500" stroke-dasharray="3 1.500" />
        <path d="M700 820.500L1211 826" stroke="#7a1c20" stroke-width="1.300" />

        <g class="cover">
          <text class="big" x="710.500 762.500 816.500 867.500" y="611 611.300 612.500 613">DON'</text>
          <text class="slab" transform="translate(924 613.500) scale(.82 1)">T</text>
          <text class="big" x="1019.500 1076 1127.500" y="614.600 615.300 615.800">LIE</text>
          <text class="sub" x="781.500" y="660" textLength="337" transform="rotate(.6 782 660)">A Game Inspired by Seventeen</text>
        </g>

        <ellipse cx="1848" cy="307" rx="34" ry="4" fill="#000" opacity=".28" filter="url(#soft)" />
        <path d="M1822 250h54v54l-54 1z" fill="url(#vc)" />
        <path d="M1876 250l3.500 3v48l-3.500 3z" fill="#dcdcdc" />
        <path d="M1831 260h35v34h-35z" fill="#dcdfe1" />
        <path d="M1826 250.300h50M1876.300 250v54M1879.300 254v48M1823 303.500h52" stroke="#8a8a8a" stroke-width="1.400" stroke-dasharray="10 4" fill="none" />
        <path d="M1822 243v62" stroke="#7378f2" stroke-width="3" /><path d="M1822 305l64 2" stroke="#ee8080" stroke-width="2.600" />
        <text class="vz" x="1817" y="239" textLength="8" lengthAdjust="spacingAndGlyphs">Z</text><text class="vx" x="1889" y="312" textLength="8" lengthAdjust="spacingAndGlyphs">X</text>
        <text class="vf" x="1830" y="283.500" textLength="38" lengthAdjust="spacingAndGlyphs">FRONT</text>
      </svg>

      <div class="tree">
        <div class="panel">
          <svg class="rew" viewBox="0 0 16 10"><path d="M8 0v10L0 5zM16 0v10L8 5z" fill="#444" /></svg>
          <span v-fit="78">BROWSER</span>
          <svg class="dot" viewBox="0 0 14 14"><circle cx="7" cy="7" r="7" fill="#333" /><path d="M3 7h8" stroke="#eee" stroke-width="1.500" /></svg>
          <svg class="grip" viewBox="0 0 5 17"><path d="M1 0v17M4 3v11" stroke="#888" stroke-width="1.300" /></svg>
        </div>
        <div v-for="(r, i) in rows" :key="i" class="row" :class="'d' + r.depth">
          <svg v-if="r.open" class="tri open"><use href="#triopen" /></svg>
          <svg v-else class="tri"><use href="#tri" /></svg>
          <div class="chip" :style="{ width: r.width + 'px' }">
            <svg v-if="r.eye" class="eye"><use :href="r.eye === 'on' ? '#eye' : '#eyeoff'" /></svg>
            <div class="node" :class="{ active: r.active, bare: !r.eye }">
              <svg class="nico" :class="{ fold: r.icon === 'folder' }"><use :href="'#' + r.icon" /></svg>
              <span v-fit="r.fit">{{ r.label }}</span>
            </div>
            <svg v-if="r.active" class="radio" viewBox="0 0 20 20"><circle cx="10" cy="10" r="9" fill="#fff" stroke="#444" stroke-width="1.500" /><circle cx="10" cy="10" r="4" fill="#333" /></svg>
          </div>
        </div>
      </div>

      <div class="bottom">
        <div class="panel comments">
          <span v-fit="86">COMMENTS</span>
          <svg class="dot" viewBox="0 0 14 14"><circle cx="7" cy="7" r="7" fill="#333" /><path d="M3 7h8M7 3v8" stroke="#eee" stroke-width="1.500" /></svg>
          <svg class="grip" viewBox="0 0 5 17"><path d="M1 0v17M4 3v11" stroke="#888" stroke-width="1.300" /></svg>
        </div>
        <div class="navbar">
          <span v-for="n in navTools" :key="n.icon" class="nt" :class="n.icon"><svg class="nv"><use :href="'#' + n.icon" /></svg><svg v-if="n.caret" class="car"><use href="#caret" /></svg></span>
        </div>
      </div>
    </main>

    <section class="timeline">
      <div class="play"><svg v-for="p in playback" :key="p"><use :href="'#' + p" /></svg></div>
      <div class="track">
        <span v-for="(f, i) in features" :key="i" class="feat"><svg><use :href="'#' + f" /></svg><i /></span>
        <svg class="marker" viewBox="0 0 18 49"><path d="M0 0h18v6l-7 8v35H7.500V14L0 6z" fill="#666" /></svg>
      </div>
      <svg class="settings"><use href="#gear" /></svg>
    </section>

    <footer class="taskbar">
      <svg class="start" viewBox="0 0 24 24"><path d="M0 3.400l10-1.300v9.400H0zM11 2l13-2v11.500H11zM0 12.500h10v9.400L0 20.600zM11 12.500h13V24l-13-2z" fill="#fff" /></svg>
      <div class="search">
        <svg width="25" height="25" viewBox="0 0 25 25"><circle cx="15.500" cy="8.800" r="8" fill="none" stroke="#111" stroke-width="1.700" /><path d="M10 14.500L.8 24" stroke="#111" stroke-width="1.700" /></svg>
        <span v-fit="198">Type here to search</span>
      </div>
      <div class="task view"><svg width="25" height="24" viewBox="0 0 25 24" fill="none" stroke="#fff" stroke-width="1.300"><path d="M.7 0v3.500h15V0M.7 6.500h15v11h-15zM.7 24v-3.500h15V24M22.500 0v6M22.500 12v12" /><path d="M21 7h3v3h-3z" fill="#fff" stroke="none" /></svg></div>
      <div class="task c61 split"><span class="chr"><svg class="i36"><use href="#chrome" /></svg><svg class="ub"><use href="#b-sky" /></svg></span></div>
      <div class="task c61 sp"><svg width="34" height="34"><use href="#spotify" /></svg></div>
      <div class="task cur"><span class="fus"><svg width="34" height="36"><use href="#fusion" /></svg><b class="ff">F</b><b class="fn">360</b></span></div>
      <div class="task c61"><span class="chr"><svg class="i36"><use href="#chrome" /></svg><svg class="ub"><use href="#b-cat" /></svg></span></div>
      <div class="task c61 ex"><svg width="32" height="28"><use href="#explorer" /></svg></div>
      <div class="task c61 split ph"><svg width="32" height="32"><use href="#photos" /></svg></div>
      <div class="weather">
        <svg width="34" height="34" viewBox="0 0 34 34"><path d="M21 0c16 4 16 24 5 31C16 37 3 34 0 23c12 5 27-5 21-23z" fill="url(#gMoon)" /></svg>
        <span v-fit="40" class="deg">53°F</span><span v-fit="47" class="sky">Clear</span>
      </div>
      <svg class="tray" width="222" height="34" viewBox="1442 1036 222 34" fill="none" stroke="#fff" stroke-width="1.400">
        <path d="M1445 1055l9-9 9 9" />
        <path d="M1496 1045.500h9v11h-9zM1505 1049l5.500-3v10l-5.500-3M1496 1041c3-2 9-2 12 0M1496 1059.500c3 2 9 2 12 0" />
        <path d="M1546 1046.500h13v9h-13z" fill="#fff" /><path d="M1544 1044.500h17v13h-17zM1562.500 1048.500v5" stroke-width="1.200" /><path d="M1537 1040h11v15h-11z" fill="#1e2229" stroke="none" /><path d="M1541 1041v4M1545 1041v4M1538.700 1045.500h8.500v3.500l-2.500 2.500h-3.500l-2.500-2.500zM1543 1052v5h2" />
        <circle cx="1592" cy="1051" r="6" fill="#bbb" stroke="none" /><circle cx="1598" cy="1048" r="6" fill="#999" stroke="none" /><path d="M1589 1057c0-8 9-9 12-4l-2 4z" fill="#eee" stroke="none" />
        <circle cx="1603.500" cy="1055.500" r="7" fill="#ffe600" stroke="none" /><path d="M1603.500 1050.500v6M1603.500 1058v2" stroke="#222" stroke-width="1.800" />
        <path d="M1649 1055l2-5 8-10c1.500-1.500 4 .5 3 2.500l-9 10zM1651 1049c-3-2-7 0-8 3s-1 7 2 7 5-3 6-6l5-6c3-2 6 0 5 2s-4 3-6 2-1 3 0 4" />
      </svg>
      <span v-fit="33" class="lang">ENG</span>
      <div class="time"><span v-fit="65">9:21 PM</span><span v-fit="75">4/9/2023</span></div>
      <svg class="note" width="26" height="25" viewBox="0 0 26 25"><path d="M0 0h24v18.500H12L7 24v-5.500H0z" fill="#fff" /><path d="M5 5h14M5 9.500h14M5 14h9" stroke="#1e2229" stroke-width="1.300" /><path d="M20 12c5 2 5 10-1 12-2 .5-4-.5-4.500-1.500 5 0 7-5 5.500-10.500z" fill="#fff" stroke="#1e2229" stroke-width="1.500" /></svg>
      <i class="peek" />
    </footer>
  </div>
</template>

<style>
body { margin: 0; background: #fff; overflow: hidden; }
</style>

<style scoped>
.screen { width: 1920px; height: 1080px; display: flex; flex-direction: column; overflow: hidden; background: #fff; font-family: "Liberation Sans", Arial, sans-serif; color: #444; }
.screen span, .screen b { white-space: nowrap; }
svg { display: block; flex: none; }
.defs { position: absolute; }
.car { width: 9px; height: 7px; color: #3a3a3a; }

.titlebar { height: 35px; display: flex; align-items: center; flex: none; }
.badge { position: relative; margin-left: 3px; width: 22px; height: 24px; }
.ico-app { width: 22px; height: 24px; }
.badge-f, .badge-n { position: absolute; left: 0; width: 24px; text-align: center; color: #fff; }
.badge-f { top: 1px; font-size: 12px; line-height: 15px; }
.badge-n { top: 17px; font-size: 5px; line-height: 6px; }
.title { margin-left: 6px; font: 18px/34px "Open Sans", "Noto Sans", sans-serif; color: #000; padding-top: 1px; }
.winctl { margin: 0 29px 3px auto; }

.tabbar { height: 48px; width: 1917px; flex: none; display: flex; background: #cbcbcb; }
.q { margin-top: 13px; }
.apps { width: 22px; height: 22px; margin-left: 13px; }
.file { width: 21px; height: 24px; margin: 12px 0 0 28px; }
.caret { width: 10px; height: 8px; margin-top: 19px; color: #5a5a5a; }
.c1 { margin-left: 8px; }
.save { width: 22px; height: 22px; margin-left: 28px; }
.undo, .redo { width: 22px; height: 20px; color: #666; margin-top: 15px; margin-left: 27px; }
.c2, .c3 { margin-left: 10px; }
.redo { color: #939393; transform: scaleX(-1); margin-left: 18px; }
.c3 { color: #939393; margin-left: 8px; }
.tab { height: 42px; margin-top: 6px; background: #bababa; border-radius: 5px 5px 0 0; display: flex; align-items: center; }
.home { width: 58px; margin-left: 12px; justify-content: center; }
.home svg { margin-top: 2px; margin-left: 1px; }
.doc { width: 607px; margin-left: 6px; box-sizing: border-box; padding-left: 227px; color: #666; font-size: 19px; }
.doc.current { background: #f1f1f1; margin-left: 6px; padding-left: 242px; width: 606px; color: #444; }
.cube { width: 22px; height: 24px; margin: 0 8px 0 0; }
.doc span { padding-top: 2px; }
.close { width: 14px; height: 14px; margin: 0 10px 0 auto; }
.add { width: 42px; margin-left: 6px; justify-content: center; }
.r { margin-top: 12px; width: 24px; height: 24px; }
.ext { margin-left: 18px; }
.clock { margin-left: 25px; }
.jobs { margin-left: 5px; width: 12px; font-size: 16px; line-height: 48px; color: #555; }
.bell { width: 22px; margin-left: 34px; }
.help { margin-left: 26px; }
.avatar { width: 36px; height: 36px; margin: 6px 0 0 28px; }

.ribbon { height: 123px; width: 1917px; flex: none; background: #f1f1f1; border-bottom: 2px solid #dedede; display: flex; box-sizing: border-box; margin-bottom: 2px; }
.design { box-sizing: border-box; width: 166px; height: 93px; margin: 15px 0 0 17px; border: 2px solid #dedede; border-radius: 6px; background: #f2f2f2; display: flex; align-items: center; gap: 8px; padding: 1px 0 0 44px; font: 16px "Liberation Sans", sans-serif; color: #3a3a3a; }
.ribbon-main { margin-left: 4px; }
.modes { display: grid; grid-template-columns: 82px 176px 75px 204px 97px 169px; margin-left: 20px; height: 37px; }
.mode { display: flex; justify-content: center; align-items: center; font-size: 16px; color: #4a4a4a; box-sizing: border-box; border-bottom: 5px solid transparent; padding-top: 3px; }
.mode.on { color: #1a9fe0; border-color: #0a96da; }
.groups { display: flex; }
.group { position: relative; height: 78px; box-sizing: border-box; display: flex; flex-direction: column; align-items: center; margin-top: 3px; }
.group:not(:last-child) { border-right: 2px solid #dedede; }
.tools { display: flex; height: 50px; margin-top: -1px; padding-left: 3px; }
.slot { width: 64.6px; display: flex; justify-content: center; align-items: center; }
.tool { width: 50px; height: 50px; }
.sel { width: 57px; height: 57px; }
.glabel { display: flex; align-items: center; gap: 6px; font-size: 16px; line-height: 18px; margin-top: 11px; }
.glabel .car { margin-top: -4px; }

.viewport { height: 738px; flex: none; position: relative; display: flex; flex-direction: column; justify-content: space-between; }
.scene { position: absolute; left: 0; top: 0; }
.cover { fill: #e1e7e4; font-family: "Liberation Mono", monospace; }
.cover .big { font-size: 91px; stroke: #e1e7e4; stroke-width: 2.600px; }
.cover .slab { font-family: "DejaVu Serif", serif; font-size: 82px; stroke: #e1e7e4; stroke-width: 2.400px; }
.cover .sub { font-size: 20px; fill: #a4aaa8; }
.vz, .vx { font: bold 15px "Liberation Sans", sans-serif; fill: #8c8cf5; }
.vx { fill: #ff9a9a; }
.vf { font: bold 16px "Liberation Sans", sans-serif; fill: #9a9fa3; }
.tree, .bottom { position: relative; }
.tree { padding: 7px 0 0 6px; }
.panel { width: 450px; height: 38px; box-sizing: border-box; border: 1.500px solid #c6c6c6; background: #f1f1f1; display: flex; align-items: center; font-size: 17px; color: #707070; }
.rew { width: 16px; height: 10px; margin: 2px 14px 0 6px; }
.dot { width: 14px; height: 14px; margin-left: auto; }
.grip { width: 5px; height: 17px; margin: 0 2px 0 10px; }
.row { height: 30px; margin-bottom: 6px; display: flex; align-items: center; font-size: 17px; }
.panel + .row { margin-top: 7px; }
.tri { width: 14px; height: 20px; margin-right: 13px; }
.tri.open { width: 18px; height: 18px; margin: 0 12px 0 -1px; }
.d0 { padding-left: 26px; }
.d1 { padding-left: 54px; }
.d2 { padding-left: 81px; }
.d0 .tri.open { margin-right: 11px; }
.d1 .tri.open { margin-right: 10px; }
.chip { height: 30px; background: #f1f1f1; display: flex; align-items: center; }
.eye { width: 24px; height: 18px; margin-left: 4.500px; }
.node { display: flex; align-items: center; height: 24px; margin-left: 8px; padding: 0 13px 0 5px; }
.node > span { padding-top: 1px; }
.node.bare { margin-left: 0; padding-left: 4.500px; }
.nico { width: 24px; height: 24px; margin-right: 21px; }
.nico.fold { height: 20px; margin-top: 1px; }
.node.active { background: #999; color: #fff; font-weight: bold; margin-left: 9px; padding: 0 0 0 4px; width: 196px; }
.radio { width: 20px; height: 20px; margin-left: 6px; }
.bottom { display: flex; padding: 0 0 6px 6px; }
.comments { padding-left: 36px; }
.navbar { margin: 1px 0 0 326px; width: 356px; height: 36px; background: #f1f1f1; display: flex; align-items: center; }
.nt { display: flex; align-items: center; }
.nv { width: 24px; height: 24px; }
.nt.orbit { margin-left: 5px; }
.nt.orbit .car { margin-left: 7px; }
.nt.lookat { margin-left: 9px; }
.nt.hand, .nt.zoom, .nt.fit { margin-left: 15px; }
.nt.fit .car { margin-left: 8px; }
.nt.display { margin-left: 9px; }
.nt.display .car, .nt.grid .car, .nt.views .car { margin-left: 4px; }
.nt.grid { margin-left: 9px; }
.nt.views { margin-left: 9px; }

.timeline { height: 74px; flex: none; box-sizing: border-box; border-top: 2px solid #dcdcdc; background: #f1f1f1; display: flex; }
.play { display: flex; gap: 17.400px; margin: 23px 0 0 15px; height: 24px; }
.play svg { width: 20px; height: 24px; }
.track { display: flex; margin: 13px 0 0 34px; }
.feat { width: 36px; height: 47px; box-sizing: border-box; display: flex; flex-direction: column; padding-top: 8px; align-items: flex-start; border-bottom: 3px solid #cdcdcd; }
.feat svg { width: 25px; height: 26px; }
.feat:nth-last-child(2) { width: 14px; }
.feat i { width: 3px; height: 8px; margin: 3px 0 0 12px; background: #cdcdcd; }
.marker { width: 18px; height: 49px; margin-left: 7px; position: relative; }
.settings { width: 25px; height: 25px; margin: 23px 19px 0 auto; }

.taskbar { height: 60px; flex: none; background: #1e2127; display: flex; align-items: center; color: #fff; font-family: "Open Sans", "Noto Sans", sans-serif; }
.start { width: 24px; height: 24px; margin: 0 24px; }
.search { width: 432px; height: 60px; box-sizing: border-box; border: 2px solid #bdbdbd; background: #f1f1f1; display: flex; align-items: center; color: #222; font-size: 21px; }
.search svg { margin: -1px 17px 0 16px; }
.search span { padding-top: 2px; }
.task { height: 60px; box-sizing: border-box; display: flex; align-items: center; justify-content: center; border-bottom: 3px solid #75b8f0; margin-right: 8px; }
.c61 { width: 61px; margin-right: 14px; padding-top: 1px; }
.c61.sp { margin-right: 8px; padding: 0 2px 0 0; }
.c61.split { border-image: linear-gradient(90deg, #75b8f0 46px, #4b7da8 46px, #4b7da8 48px, #5a93c2 48px) 3; border-style: solid; border-width: 0 0 3px; }
.view { width: 70px; border: 0; margin-right: 13px; margin-left: 0; }
.view svg { margin-left: 3px; }
.cur { width: 73px; background: #4c4e53; }
.chr { position: relative; width: 39px; height: 39px; margin-left: 1px; padding-top: 2px; }
.i36 { width: 36px; height: 36px; }
.ub { position: absolute; right: 0; bottom: 0; width: 24px; height: 24px; }
.fus { position: relative; width: 34px; height: 36px; margin-top: -1px; }
.ff, .fn { position: absolute; left: 1px; width: 34px; text-align: center; font-family: "Open Sans", sans-serif; }
.ff { top: 1px; font-size: 20px; line-height: 23px; }
.fn { top: 26px; font-size: 8px; line-height: 9px; }
.ex svg, .ph svg { margin-left: -1px; }
.weather { display: flex; align-items: center; margin-left: 217px; font-size: 20px; }
.deg { margin-left: 13px; }
.sky { margin-left: 13px; }
.weather span { padding-top: 3px; }
.tray { margin: 5px 0 0 41px; }
.lang { margin-left: 29px; font-size: 17px; }
.time { display: flex; flex-direction: column; align-items: center; margin-left: 23px; width: 76px; font-size: 18px; line-height: 28px; padding-bottom: 1px; }
.note { margin: 0 0 0 33px; }
.peek { width: 1px; height: 60px; background: #777; margin-left: auto; margin-right: 7px; }
</style>
